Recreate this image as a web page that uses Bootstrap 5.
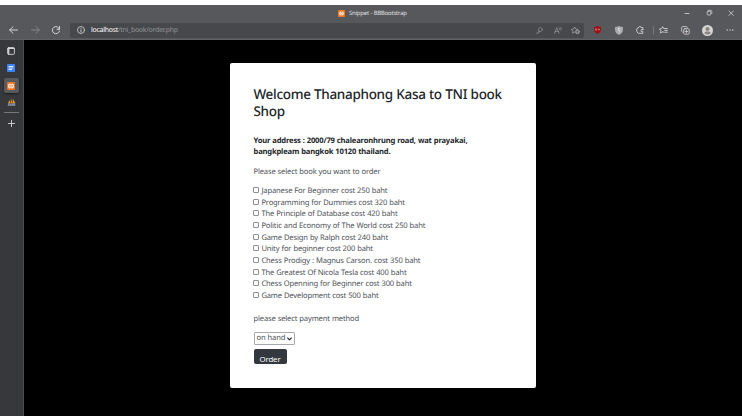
<!DOCTYPE html>
<html lang="en">
<head>
<meta charset="utf-8">
<title>Snippet - BBBootstrap</title>
<link rel="stylesheet" href="https://cdn.jsdelivr.net/npm/bootstrap@5.3.0/dist/css/bootstrap.min.css">
<style>
body{width:742px;height:416px;overflow:hidden;background:#fff;font-family:"Noto Sans","Open Sans",sans-serif;font-size:7.6px;letter-spacing:-.16px;word-spacing:.25px;line-height:11.62px;color:#4c5157;padding-top:5px;text-rendering:geometricPrecision}
svg{display:block;fill:none;stroke:#d5d5d7;stroke-width:1;stroke-linecap:round;stroke-linejoin:round;overflow:visible}
.titlebar{height:16px;background:#57585c;color:#e2e2e3;font-size:5.9px}
.title-main{padding-left:338px;width:682px}
.title-text{letter-spacing:-.18px;padding:1px 0 0 4px}
.win{width:22px}
.toolbar{height:19px;background:#57585c;border-bottom:1px solid #5f6468}
.address{width:513.5px;height:15px;margin-left:1px;background:#47484c;border-radius:2px;font-size:6.9px;letter-spacing:-.24px;color:#929397}
.url{padding-top:1.4px}
.url b{font-weight:400;color:#fff}
.c15{width:15px}.c16{width:16px}.c17{width:17px}.c18{width:18px}.c20{width:20px}.c21{width:21px}.c23{width:23px}.c24{width:24.5px}.c26{width:26px}.c27{width:27px}.c28{width:28px}
.vline{width:1px;height:8px;background:#77787b}
.sidebar{width:24px;background:#37383c;border-right:1px solid #4d4e51;padding-right:1px}
.side-item{height:17px}
.side-active{width:15px;height:15px;background:#595a5e;border-radius:2px;box-shadow:0 1px 2px #1b1b1d}
.side-rule{width:15px;height:1px;background:#77787b}
.stage{background:#000;padding:23px 0 0 206px}
.order-card{width:306px;height:325px;border:0;border-radius:2px;padding:23.4px 23.5px 0}
.order-card h1{font-size:13.5px;line-height:16.3px;font-weight:500;color:#212529;margin:0 0 16.8px;letter-spacing:-.31px;white-space:nowrap}
.delivery{font-weight:700;color:#212529;margin:0 0 7.8px;white-space:nowrap;font-size:7.6px;letter-spacing:-.17px}
.intro{margin:0 0 7.8px}
.book{height:11.62px;white-space:nowrap}
.book input{appearance:none;flex:none;width:6px;height:6px;border:1px solid #8d9095;border-radius:1px;margin:0 2.2px 3.6px -.3px;background:#fff}
.pay{margin:11.7px 0 6.4px}
.method{width:41px;height:13px;border:1px solid #a6a8ab;border-radius:1px;padding:0 2px}
.method span{padding-top:1.4px}
.order-btn{width:33px;height:15px;margin-top:4px;padding:4.5px 0 0;border:0;border-radius:2px;background:#32383e;color:#fff;font-size:7.8px;letter-spacing:-.1px;line-height:11px}
</style>
</head>
<body class="d-flex flex-column">
<header class="titlebar d-flex align-items-center flex-shrink-0">
  <div class="title-main d-flex align-items-center">
    <svg width="7" height="7" viewBox="0 0 8 8"><rect width="8" height="8" rx="1" fill="#f57420" stroke="none"/><path d="M3.400 2.300Q1.700 1.700 1.700 4T3.400 5.700M4.600 2.300Q6.300 1.700 6.300 4T4.600 5.700M3.200 4h1.600" stroke="#fff" stroke-width="1.100"/></svg>
    <span class="title-text">Snippet - BBBootstrap</span>
  </div>
  <div class="win"><svg width="10" height="6" viewBox="0 0 10 6"><path d="M3 3.500h4" stroke-width=".8"/></svg></div>
  <div class="win"><svg width="10" height="6" viewBox="0 0 10 6"><rect x="3.200" y="1.200" width="3.600" height="3.800" rx=".8" stroke-width=".8"/><path d="M4.400 .3h2.200q1.200 0 1.200 1.200v2" stroke-width=".7"/></svg></div>
  <div><svg width="10" height="6" viewBox="0 0 10 6"><path d="M3 1l4.400 4.400M7.400 1L3 5.400" stroke-width=".8"/></svg></div>
</header>
<nav class="toolbar d-flex align-items-center flex-shrink-0">
  <div class="c27 d-flex justify-content-center"><svg width="9" height="8" viewBox="0 0 9 8"><path d="M8.500 4H.7M4 .7L.7 4 4 7.300"/></svg></div>
  <div class="c16 d-flex justify-content-center"><svg width="9" height="8" viewBox="0 0 9 8"><path d="M.5 4h7.800M5 .7L8.300 4 5 7.300" stroke="#858689"/></svg></div>
  <div class="c26 d-flex justify-content-center"><svg width="8" height="8" viewBox="0 0 8 8"><path d="M7.500 3.300A3.600 3.600 0 1 0 7.500 5M7.500.5v2.800H5"/></svg></div>
  <div class="address d-flex align-items-center">
    <div class="c21 d-flex justify-content-center"><svg width="8" height="8" viewBox="0 0 8 8"><circle cx="4" cy="4" r="3.500" stroke-width=".8"/><path d="M4 3.700V6M4 2.200v.1" stroke-width=".9"/></svg></div>
    <span class="url me-auto"><b>localhost</b>/tni_book/order.php</span>
    <div class="c18 d-flex justify-content-center"><svg width="7" height="7" viewBox="0 0 7 7"><g stroke="#909194" stroke-width=".7"><circle cx="4.400" cy="2.500" r="2"/><path d="M3 4L.6 6.400h1.300L4 4.500"/></g></svg></div>
    <div class="c18 d-flex justify-content-center"><svg width="8" height="7" viewBox="0 0 8 7"><path d="M.5 6.500L2.800.7l2.300 5.800M1.300 4.500h3M5.500.8q.9.9 0 1.800M6.800.2q1.500 1.500 0 3" stroke="#909194" stroke-width=".75"/></svg></div>
    <div class="c17 d-flex justify-content-center"><svg width="9" height="8" viewBox="0 0 9 8"><g stroke="#a5a6a8" stroke-width=".75"><path d="M3.500 6.200L1.600 7.200 2 5 .5 3.300l2.100-.3 1-2 1 2 2.100.3"/><circle cx="6.400" cy="5.800" r="1.900" fill="#a5a6a8"/></g><path d="M5.500 5.800h1.800M6.400 4.900v1.800" stroke="#47484c" stroke-width=".75"/></svg></div>
  </div>
  <div class="c28 d-flex justify-content-center"><svg width="7" height="8" viewBox="0 0 7 8"><path d="M3.500 0q1.600 1 3.500 1v2.500Q7 6.300 3.500 8 0 6.300 0 3.500V1q1.900 0 3.500-1z" fill="#a00d12" stroke="none"/><path d="M1.500 2.800v1.300q.7 1 1.300 0V2.800M5 3.100a.5.5 0 1 0 .1 0" stroke="#e7c6c7" stroke-width=".5"/></svg></div>
  <div class="c15 d-flex justify-content-center"><svg width="8" height="9" viewBox="0 0 8 9"><path d="M4 0q1.800 1 4 1v2.500Q8 7 4 9 0 7 0 3.500V1q2.200 0 4-1z" fill="#a9aaac" stroke="none"/><path d="M4.800 2.300H3.500v2h1.200v1.900" stroke="#e4e4e4" stroke-width=".8"/></svg></div>
  <div class="c26 d-flex justify-content-center"><svg width="8" height="8" viewBox="0 0 8 8"><path d="M6.800 2.900V1.500H5A1 1 0 0 0 3 1.300Q.6 1.800.6 4t1.700 3.300h4.500V5.600H5.900a1 1 0 0 1 0-2h1.400" stroke-width=".9"/></svg></div>
  <div class="vline"></div>
  <div class="c20 d-flex justify-content-center"><svg width="9" height="8" viewBox="0 0 9 8"><path d="M5 6.200L3.500 5.800 1.500 7l.3-2.300L.5 3l2.100-.4L3.700.7l1.100 1.900h3.500M5.900 4.400h2.400M6 6.200h2.300" stroke-width=".9"/></svg></div>
  <div class="c23 d-flex justify-content-center"><svg width="9" height="9" viewBox="0 0 9 9"><rect x="2.700" y="2.700" width="5.500" height="5.500" rx="1.200" stroke-width=".8"/><path d="M1.400 6.200Q.5 5.800.6 4.700V1.700Q.7.6 1.800.6h3.400q.9 0 1.200.8M5.450 4v2.900M4 5.450h2.900" stroke-width=".8"/></svg></div>
  <div class="c21 d-flex justify-content-center"><svg width="11" height="11" viewBox="0 0 11 11"><g stroke="none"><circle cx="5.500" cy="5.500" r="5.500" fill="#d7d5d2"/><circle cx="5.500" cy="4" r="2.100" fill="#888683"/><path d="M2.500 8.500V8q0-1.500 1.500-1.500h3Q8.500 6.500 8.500 8v.5Q5.500 10.500 2.500 8.500z" fill="#888683"/></g></svg></div>
  <div class="c24 d-flex justify-content-center"><svg width="8" height="2" viewBox="0 0 8 2"><g stroke="none" fill="#d5d5d7"><circle cx="1.200" cy="1" r=".7"/><circle cx="4" cy="1" r=".7"/><circle cx="6.800" cy="1" r=".7"/></g></svg></div>
</nav>
<div class="d-flex flex-grow-1">
  <aside class="sidebar d-flex flex-column align-items-center pt-1 flex-shrink-0">
    <div class="side-item d-flex align-items-center pb-1"><svg width="8" height="8" viewBox="0 0 8 8"><rect x=".6" y=".6" width="6.800" height="6.800" rx="1.200" stroke-width=".9"/><path d="M1 1.400h6M1.700 2v5" stroke-width="1.300"/></svg></div>
    <div class="side-item d-flex align-items-center pb-1"><svg width="8" height="8" viewBox="0 0 8 8"><rect width="8" height="8" rx=".8" fill="#3b82f6" stroke="none"/><path d="M2 2.500h4M2 4h4M2 5.500h2.600" stroke="#fff" stroke-width=".8"/></svg></div>
    <div class="side-item d-flex align-items-start"><div class="side-active d-flex align-items-center justify-content-center"><svg width="8" height="8" viewBox="0 0 8 8"><rect width="8" height="8" rx="1" fill="#f57420" stroke="none"/><path d="M3.400 2.300Q1.700 1.700 1.700 4T3.400 5.700M4.600 2.300Q6.300 1.700 6.300 4T4.600 5.700M3.200 4h1.600" stroke="#fff" stroke-width="1.100"/></svg></div></div>
    <div class="side-item d-flex align-items-center pb-1"><svg width="9" height="8" viewBox="0 0 9 8"><g stroke="none"><path d="M.8 5.500L3.200 1.500v4zM3.600 5.500L4.900 0v5.500zM5.400 5.500L6 1l2.500 4.500z" fill="#ef9b28"/><path d="M.3 7.800L2 4.900l.8 1.800 1-1.600.9 1.700 1-1.700.9 1.500.9-1.600L8.700 7.800z" fill="#8b8fae"/></g></svg></div>
    <div class="side-rule"></div>
    <div class="side-item d-flex align-items-center pt-1"><svg width="7" height="7" viewBox="0 0 7 7"><path d="M3.500.4v6.200M.4 3.500h6.200" stroke-width=".9"/></svg></div>
  </aside>
  <main class="stage flex-grow-1">
    <form class="order-card card">
      <h1>Welcome Thanaphong Kasa to TNI book<br>Shop</h1>
      <p class="delivery">Your address : 2000/79 chalearonhrung road, wat prayakai,<br>bangkpleam bangkok 10120 thailand.</p>
      <p class="intro">Please select book you want to order</p>
      <label class="book d-flex align-items-center"><input type="checkbox">Japanese For Beginner cost 250 baht</label>
      <label class="book d-flex align-items-center"><input type="checkbox">Programming for Dummies cost 320 baht</label>
      <label class="book d-flex align-items-center"><input type="checkbox">The Principle of Database cost 420 baht</label>
      <label class="book d-flex align-items-center"><input type="checkbox">Politic and Economy of The World cost 250 baht</label>
      <label class="book d-flex align-items-center"><input type="checkbox">Game Design by Ralph cost 240 baht</label>
      <label class="book d-flex align-items-center"><input type="checkbox">Unity for beginner cost 200 baht</label>
      <label class="book d-flex align-items-center"><input type="checkbox">Chess Prodigy : Magnus Carson. cost 350 baht</label>
      <label class="book d-flex align-items-center"><input type="checkbox">The Greatest Of Nicola Tesla cost 400 baht</label>
      <label class="book d-flex align-items-center"><input type="checkbox">Chess Openning for Beginner cost 300 baht</label>
      <label class="book d-flex align-items-center"><input type="checkbox">Game Development cost 500 baht</label>
      <p class="pay">please select payment method</p>
      <div class="method d-flex align-items-center justify-content-between"><span>on hand</span><svg width="5" height="4" viewBox="0 0 5 4"><path d="M.7 1l1.800 1.800L4.300 1" stroke="#212529" stroke-width="1.100"/></svg></div>
      <button type="button" class="order-btn btn">Order</button>
    </form>
  </main>
</div>
<script src="https://cdn.jsdelivr.net/npm/bootstrap@5.3.0/dist/js/bootstrap.bundle.min.js"></script>
</body>
</html>
